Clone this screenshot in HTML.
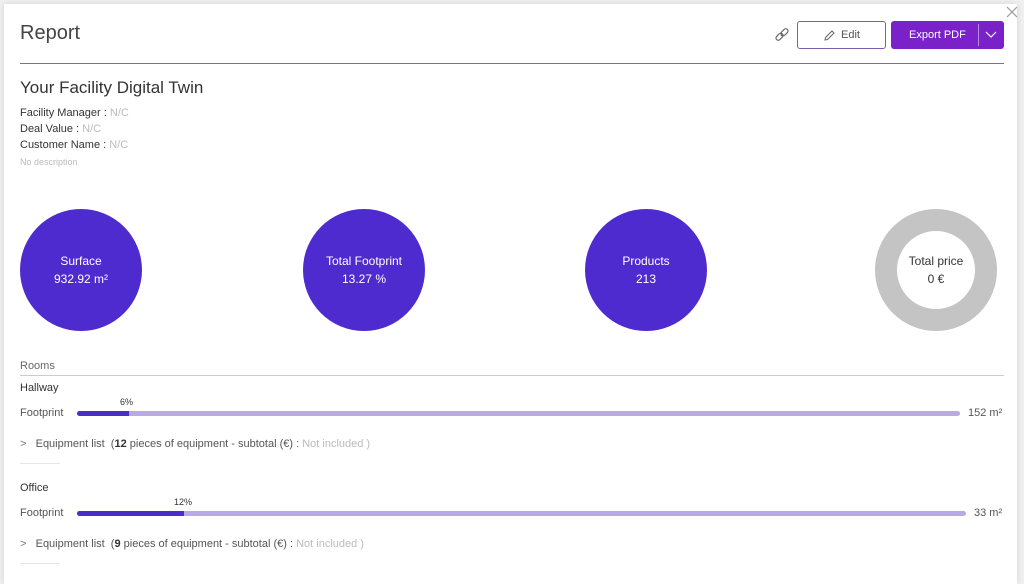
<!DOCTYPE html>
<html><head><style>
*{margin:0;padding:0;box-sizing:border-box}
body{width:1024px;height:572px;overflow:hidden;background:#f0f0f0;font-family:"Liberation Sans",sans-serif;color:#333;position:relative}
.page{position:absolute;left:4px;top:4px;width:1013px;height:580px;background:#fff;box-shadow:0 0 6px rgba(0,0,0,.12)}
.a{position:absolute;white-space:nowrap}
.circ{position:absolute;width:122px;height:122px;border-radius:50%;background:#4e2bce;color:#fff;text-align:center;font-size:12px;line-height:18px;display:flex;flex-direction:column;justify-content:center}
.bar{position:absolute;height:5px;border-radius:3px;background:#b9a9e8}
.bar i{position:absolute;left:0;top:0;height:5px;border-radius:3px 0 0 3px;background:#4a2ec9}
.s{font-size:11px}
</style></head><body>
<div class="page"></div>
<div class="a" style="left:20px;top:22px;font-size:20px;color:#444">Report</div>
<svg class="a" style="left:774px;top:27px" width="16" height="16" viewBox="0 0 16 16" fill="none" stroke="#666" stroke-width="1.2"><path d="M7 9 L9 7"/><rect x="1.5" y="7.5" width="8" height="4.5" rx="2.2" transform="rotate(-45 5.5 9.75)"/><rect x="6.5" y="3" width="8" height="4.5" rx="2.2" transform="rotate(-45 10.5 5.25)"/></svg>
<div class="a" style="left:797px;top:21px;width:89px;height:28px;border:1px solid #7a5fa8;border-radius:3px;font-size:11px;color:#555;line-height:26px">
<svg style="position:absolute;left:26px;top:8px" width="11" height="11" viewBox="0 0 11 11" fill="none" stroke="#666" stroke-width="1"><path d="M1 10 L1.5 7.5 L8 1 L10 3 L3.5 9.5 Z"/></svg><span style="position:absolute;left:43px">Edit</span></div>
<div class="a" style="left:891px;top:21px;width:113px;height:28px;background:#7a21c9;border-radius:3px;color:#fff;font-size:11px;line-height:28px"><span style="position:absolute;left:18px">Export PDF</span><span style="position:absolute;left:87px;top:3px;width:1px;height:22px;background:#b78be0"></span>
<svg style="position:absolute;left:94px;top:10px" width="12" height="8" viewBox="0 0 12 8" fill="none" stroke="#fff" stroke-width="1.2"><path d="M1 1 L6 6 L11 1"/></svg></div>
<svg class="a" style="left:1005px;top:5px" width="14" height="14" viewBox="0 0 14 14" stroke="#999" stroke-width="1.2"><path d="M2 2 L12 12 M12 2 L2 12"/></svg>
<div class="a" style="left:20px;top:63px;width:984px;height:1px;background:#777"></div>
<div class="a" style="left:20px;top:78px;font-size:17px;color:#333">Your Facility Digital Twin</div>
<div class="a s" style="left:20px;top:107px">Facility Manager : <span style="color:#bbb">N/C</span></div>
<div class="a s" style="left:20px;top:123px">Deal Value : <span style="color:#bbb">N/C</span></div>
<div class="a s" style="left:20px;top:139px">Customer Name : <span style="color:#bbb">N/C</span></div>
<div class="a" style="left:20px;top:157px;font-size:9px;color:#bbb">No description</div>
<div class="circ" style="left:20px;top:209px">Surface<br>932.92 m²</div>
<div class="circ" style="left:303px;top:209px">Total Footprint<br>13.27 %</div>
<div class="circ" style="left:585px;top:209px">Products<br>213</div>
<div class="circ" style="left:875px;top:209px;background:#fff;border:22px solid #c4c4c4;color:#333">Total price<br>0 €</div>
<div class="a s" style="left:20px;top:360px;color:#666">Rooms</div>
<div class="a" style="left:20px;top:375px;width:984px;height:1px;background:#ccc"></div>
<div class="a s" style="left:20px;top:382px">Hallway</div>
<div class="a" style="left:120px;top:397px;font-size:9px">6%</div>
<div class="a s" style="left:20px;top:407px;color:#555">Footprint</div>
<div class="bar" style="left:77px;top:411px;width:883px"><i style="width:52px"></i></div>
<div class="a s" style="left:968px;top:407px;color:#555">152 m²</div>
<div class="a s" style="left:20px;top:438px;color:#555"><span style="color:#777">&gt;</span>&nbsp;&nbsp; Equipment list &nbsp;(<b style="font-weight:bold;color:#333">12</b> pieces of equipment - subtotal (€) : <span style="color:#bbb">Not included )</span></div>
<div class="a" style="left:20px;top:463px;width:40px;height:1px;background:#e6e6e6"></div>
<div class="a s" style="left:20px;top:482px">Office</div>
<div class="a" style="left:174px;top:497px;font-size:9px">12%</div>
<div class="a s" style="left:20px;top:507px;color:#555">Footprint</div>
<div class="bar" style="left:77px;top:511px;width:889px"><i style="width:107px"></i></div>
<div class="a s" style="left:974px;top:507px;color:#555">33 m²</div>
<div class="a s" style="left:20px;top:538px;color:#555"><span style="color:#777">&gt;</span>&nbsp;&nbsp; Equipment list &nbsp;(<b style="font-weight:bold;color:#333">9</b> pieces of equipment - subtotal (€) : <span style="color:#bbb">Not included )</span></div>
<div class="a" style="left:20px;top:563px;width:40px;height:1px;background:#e6e6e6"></div>
</body></html>
